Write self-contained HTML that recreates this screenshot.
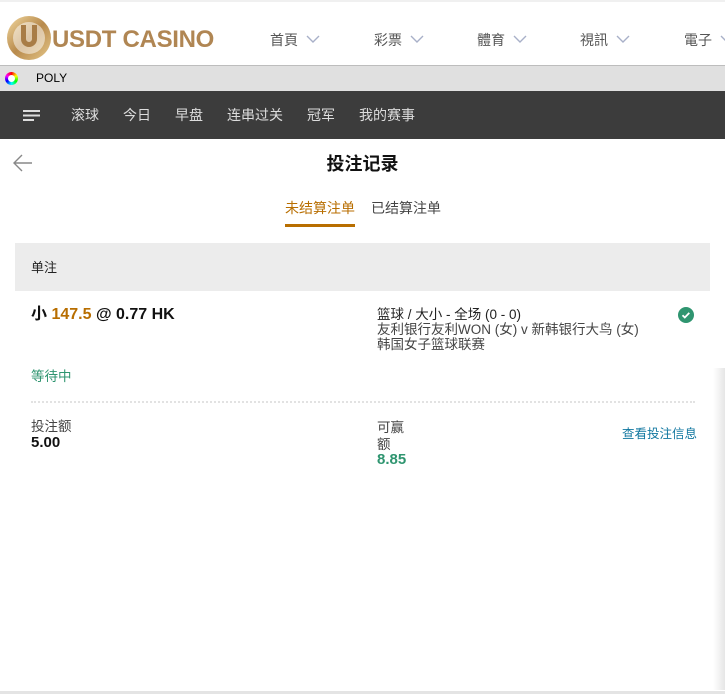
<!DOCTYPE html>
<html><head><meta charset="utf-8"><style>
*{margin:0;padding:0;box-sizing:border-box}
body{width:725px;height:694px;overflow:hidden;background:#fff;font-family:"Liberation Sans","Noto Sans CJK SC",sans-serif;position:relative}
.abs{position:absolute;line-height:1.15}
.hdr{top:0;left:0;width:725px;height:66px;background:#fff;border-top:2px solid #f0f0f0;border-bottom:1px solid #bdbdbd}
.menu{top:30px;font-size:14px;color:#555;white-space:nowrap}
.menu svg{margin-left:8px;vertical-align:2px}
.poly{top:66px;left:0;width:725px;height:25px;background:#e0e0e0;font-size:12px}
.nav{top:91px;left:0;width:725px;height:48px;background:#3c3c3c;color:#ddd;font-size:14px}
.nav div{position:absolute;top:16px}
</style></head><body>
<div class="abs hdr">
  <svg class="abs" style="left:6px;top:13px" width="46" height="46" viewBox="0 0 46 46"><defs><linearGradient id="g" x1="0" y1="0" x2="1" y2="1"><stop offset="0" stop-color="#f2d9a0"/><stop offset=".5" stop-color="#b88a4c"/><stop offset="1" stop-color="#e6c88a"/></linearGradient></defs><circle cx="23" cy="23" r="22" fill="url(#g)"/><circle cx="23" cy="23" r="16" fill="#fff" opacity=".5"/><path d="M15 10v14a8 8 0 0 0 16 0V10h-5v14a3 3 0 0 1-6 0V10z" fill="#a87c46"/></svg>
  <div class="abs" style="left:52px;top:24px;font-size:24px;font-weight:bold;color:#b08653;letter-spacing:-0.3px">USDT CASINO</div>
  <div class="abs menu" style="left:270px">首頁<svg width="14" height="8"><path d="M1 1l6 6 6-6" stroke="#a8b0c8" stroke-width="1.4" fill="none"/></svg></div>
  <div class="abs menu" style="left:374px">彩票<svg width="14" height="8"><path d="M1 1l6 6 6-6" stroke="#a8b0c8" stroke-width="1.4" fill="none"/></svg></div>
  <div class="abs menu" style="left:477px">體育<svg width="14" height="8"><path d="M1 1l6 6 6-6" stroke="#a8b0c8" stroke-width="1.4" fill="none"/></svg></div>
  <div class="abs menu" style="left:580px">視訊<svg width="14" height="8"><path d="M1 1l6 6 6-6" stroke="#a8b0c8" stroke-width="1.4" fill="none"/></svg></div>
  <div class="abs menu" style="left:684px">電子<svg width="14" height="8"><path d="M1 1l6 6 6-6" stroke="#a8b0c8" stroke-width="1.4" fill="none"/></svg></div>
</div>
<div class="abs poly">
  <div class="abs" style="left:5px;top:6px;width:13px;height:13px;border-radius:50%;background:conic-gradient(red,yellow,lime,cyan,blue,magenta,red)"><div style="margin:3px;width:7px;height:7px;border-radius:50%;background:#fff"></div></div>
  <div class="abs" style="left:36px;top:6px">POLY</div>
</div>
<div class="abs nav">
  <svg class="abs" style="left:23px;top:19px" width="17" height="11"><rect y="0" width="17" height="2" fill="#ddd"/><rect y="4.5" width="17" height="2" fill="#ddd"/><rect y="9" width="11" height="2" fill="#ddd"/></svg>
  <div style="left:71px">滚球</div><div style="left:123px">今日</div><div style="left:175px">早盘</div><div style="left:227px">连串过关</div><div style="left:307px">冠军</div><div style="left:359px">我的赛事</div>
</div>
<svg class="abs" style="left:13px;top:154px" width="20" height="18"><path d="M19 9H2M9 1L1 9l8 8" stroke="#888" stroke-width="1.4" fill="none"/></svg>
<div class="abs" style="left:0;width:725px;top:154px;text-align:center;font-size:18px;font-weight:bold;color:#111">投注记录</div>
<div class="abs" style="left:285px;top:200px;font-size:14px;color:#b86e00">未结算注单</div>
<div class="abs" style="left:285px;top:224px;width:70px;height:3px;background:#b86e00"></div>
<div class="abs" style="left:371px;top:200px;font-size:14px;color:#444">已结算注单</div>
<div class="abs" style="left:15px;top:243px;width:695px;height:48px;background:#ececec"></div>
<div class="abs" style="left:31px;top:261px;font-size:13px;color:#222">单注</div>
<div class="abs" style="left:31px;top:306px;font-size:16px;font-weight:bold;color:#111">小 <span style="color:#b86e00">147.5</span> @ 0.77 HK</div>
<div class="abs" style="left:377px;top:307px;font-size:13.5px;color:#222;line-height:15px">篮球 / 大小 - 全场 (0 - 0)<br><span style="color:#444">友利银行友利WON (女) v 新韩银行大鸟 (女)<br>韩国女子篮球联赛</span></div>
<svg class="abs" style="left:678px;top:307px" width="16" height="16"><circle cx="8" cy="8" r="8" fill="#2f9570"/><path d="M4.5 8.2l2.3 2.3 4.5-4.6" stroke="#fff" stroke-width="1.8" fill="none"/></svg>
<div class="abs" style="left:31px;top:369px;font-size:13.5px;color:#2f9570">等待中</div>
<div class="abs" style="left:31px;top:401px;width:664px;border-top:2px dotted #e2e2e2"></div>
<div class="abs" style="left:31px;top:419px;font-size:13.5px;color:#444">投注额</div>
<div class="abs" style="left:31px;top:434px;font-size:15px;font-weight:bold;color:#111">5.00</div>
<div class="abs" style="left:377px;top:419px;font-size:13.5px;color:#444;line-height:17px">可赢<br>额</div>
<div class="abs" style="left:377px;top:451px;font-size:15px;font-weight:bold;color:#2f9570">8.85</div>
<div class="abs" style="left:622px;top:427px;font-size:12.5px;color:#1177a0">查看投注信息</div>
<div class="abs" style="left:713px;top:368px;width:12px;height:322px;background:linear-gradient(90deg,#fff,#e6e6e6)"></div>
<div class="abs" style="left:0;top:691px;width:725px;height:3px;background:#e4e4e4"></div>
</body></html>
